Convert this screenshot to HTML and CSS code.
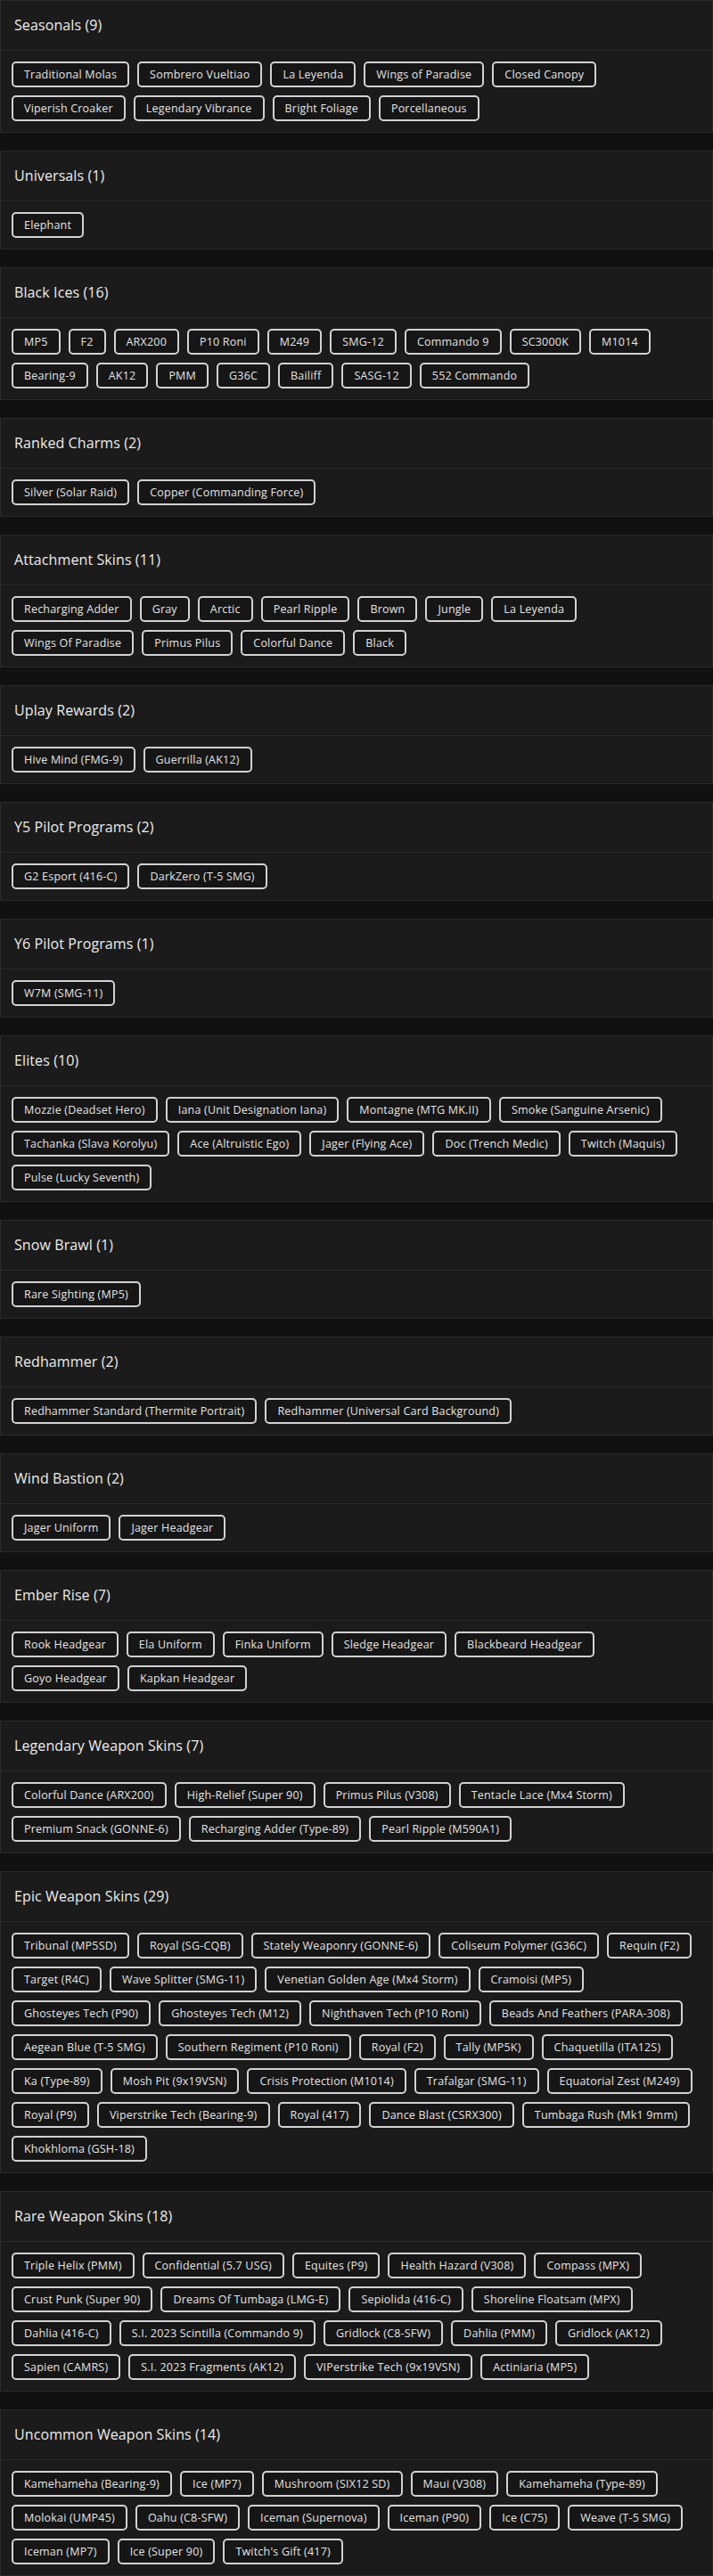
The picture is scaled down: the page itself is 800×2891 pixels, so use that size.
FILE: index.html
```html
<!DOCTYPE html>
<html lang="en">
<head>
<meta charset="utf-8">
<title>Collection</title>
<link rel="stylesheet" href="styles.css">
</head>
<body>
<main class="page">
  <section class="card">
    <header class="card-head"><h2 class="card-title">Seasonals (9)</h2></header>
    <div class="chips">
      <span class="chip">Traditional Molas</span><span class="chip">Sombrero Vueltiao</span><span class="chip">La Leyenda</span><span class="chip">Wings of Paradise</span><span class="chip">Closed Canopy</span><span class="chip">Viperish Croaker</span><span class="chip">Legendary Vibrance</span><span class="chip">Bright Foliage</span><span class="chip">Porcellaneous</span>
    </div>
  </section>
  <section class="card">
    <header class="card-head"><h2 class="card-title">Universals (1)</h2></header>
    <div class="chips"><span class="chip">Elephant</span></div>
  </section>
  <section class="card">
    <header class="card-head"><h2 class="card-title">Black Ices (16)</h2></header>
    <div class="chips">
      <span class="chip">MP5</span><span class="chip">F2</span><span class="chip">ARX200</span><span class="chip">P10 Roni</span><span class="chip">M249</span><span class="chip">SMG-12</span><span class="chip">Commando 9</span><span class="chip">SC3000K</span><span class="chip">M1014</span><span class="chip">Bearing-9</span><span class="chip">AK12</span><span class="chip">PMM</span><span class="chip">G36C</span><span class="chip">Bailiff</span><span class="chip">SASG-12</span><span class="chip">552 Commando</span>
    </div>
  </section>
  <section class="card">
    <header class="card-head"><h2 class="card-title">Ranked Charms (2)</h2></header>
    <div class="chips"><span class="chip">Silver (Solar Raid)</span><span class="chip">Copper (Commanding Force)</span></div>
  </section>
  <section class="card">
    <header class="card-head"><h2 class="card-title">Attachment Skins (11)</h2></header>
    <div class="chips">
      <span class="chip">Recharging Adder</span><span class="chip">Gray</span><span class="chip">Arctic</span><span class="chip">Pearl Ripple</span><span class="chip">Brown</span><span class="chip">Jungle</span><span class="chip">La Leyenda</span><span class="chip">Wings Of Paradise</span><span class="chip">Primus Pilus</span><span class="chip">Colorful Dance</span><span class="chip">Black</span>
    </div>
  </section>
  <section class="card">
    <header class="card-head"><h2 class="card-title">Uplay Rewards (2)</h2></header>
    <div class="chips"><span class="chip">Hive Mind (FMG-9)</span><span class="chip">Guerrilla (AK12)</span></div>
  </section>
  <section class="card">
    <header class="card-head"><h2 class="card-title">Y5 Pilot Programs (2)</h2></header>
    <div class="chips"><span class="chip">G2 Esport (416-C)</span><span class="chip">DarkZero (T-5 SMG)</span></div>
  </section>
  <section class="card">
    <header class="card-head"><h2 class="card-title">Y6 Pilot Programs (1)</h2></header>
    <div class="chips"><span class="chip">W7M (SMG-11)</span></div>
  </section>
  <section class="card">
    <header class="card-head"><h2 class="card-title">Elites (10)</h2></header>
    <div class="chips">
      <span class="chip">Mozzie (Deadset Hero)</span><span class="chip">Iana (Unit Designation Iana)</span><span class="chip">Montagne (MTG MK.II)</span><span class="chip">Smoke (Sanguine Arsenic)</span><span class="chip">Tachanka (Slava Korolyu)</span><span class="chip">Ace (Altruistic Ego)</span><span class="chip">Jager (Flying Ace)</span><span class="chip">Doc (Trench Medic)</span><span class="chip">Twitch (Maquis)</span><span class="chip">Pulse (Lucky Seventh)</span>
    </div>
  </section>
  <section class="card">
    <header class="card-head"><h2 class="card-title">Snow Brawl (1)</h2></header>
    <div class="chips"><span class="chip">Rare Sighting (MP5)</span></div>
  </section>
  <section class="card">
    <header class="card-head"><h2 class="card-title">Redhammer (2)</h2></header>
    <div class="chips"><span class="chip">Redhammer Standard (Thermite Portrait)</span><span class="chip">Redhammer (Universal Card Background)</span></div>
  </section>
  <section class="card">
    <header class="card-head"><h2 class="card-title">Wind Bastion (2)</h2></header>
    <div class="chips"><span class="chip">Jager Uniform</span><span class="chip">Jager Headgear</span></div>
  </section>
  <section class="card">
    <header class="card-head"><h2 class="card-title">Ember Rise (7)</h2></header>
    <div class="chips">
      <span class="chip">Rook Headgear</span><span class="chip">Ela Uniform</span><span class="chip">Finka Uniform</span><span class="chip">Sledge Headgear</span><span class="chip">Blackbeard Headgear</span><span class="chip">Goyo Headgear</span><span class="chip">Kapkan Headgear</span>
    </div>
  </section>
  <section class="card">
    <header class="card-head"><h2 class="card-title">Legendary Weapon Skins (7)</h2></header>
    <div class="chips">
      <span class="chip">Colorful Dance (ARX200)</span><span class="chip">High-Relief (Super 90)</span><span class="chip">Primus Pilus (V308)</span><span class="chip">Tentacle Lace (Mx4 Storm)</span><span class="chip">Premium Snack (GONNE-6)</span><span class="chip">Recharging Adder (Type-89)</span><span class="chip">Pearl Ripple (M590A1)</span>
    </div>
  </section>
  <section class="card">
    <header class="card-head"><h2 class="card-title">Epic Weapon Skins (29)</h2></header>
    <div class="chips">
      <span class="chip">Tribunal (MP5SD)</span><span class="chip">Royal (SG-CQB)</span><span class="chip">Stately Weaponry (GONNE-6)</span><span class="chip">Coliseum Polymer (G36C)</span><span class="chip">Requin (F2)</span><span class="chip">Target (R4C)</span><span class="chip">Wave Splitter (SMG-11)</span><span class="chip">Venetian Golden Age (Mx4 Storm)</span><span class="chip">Cramoisi (MP5)</span><span class="chip">Ghosteyes Tech (P90)</span><span class="chip">Ghosteyes Tech (M12)</span><span class="chip">Nighthaven Tech (P10 Roni)</span><span class="chip">Beads And Feathers (PARA-308)</span><span class="chip">Aegean Blue (T-5 SMG)</span><span class="chip">Southern Regiment (P10 Roni)</span><span class="chip">Royal (F2)</span><span class="chip">Tally (MP5K)</span><span class="chip">Chaquetilla (ITA12S)</span><span class="chip">Ka (Type-89)</span><span class="chip">Mosh Pit (9x19VSN)</span><span class="chip">Crisis Protection (M1014)</span><span class="chip">Trafalgar (SMG-11)</span><span class="chip">Equatorial Zest (M249)</span><span class="chip">Royal (P9)</span><span class="chip">Viperstrike Tech (Bearing-9)</span><span class="chip">Royal (417)</span><span class="chip">Dance Blast (CSRX300)</span><span class="chip">Tumbaga Rush (Mk1 9mm)</span><span class="chip">Khokhloma (GSH-18)</span>
    </div>
  </section>
  <section class="card">
    <header class="card-head"><h2 class="card-title">Rare Weapon Skins (18)</h2></header>
    <div class="chips">
      <span class="chip">Triple Helix (PMM)</span><span class="chip">Confidential (5.7 USG)</span><span class="chip">Equites (P9)</span><span class="chip">Health Hazard (V308)</span><span class="chip">Compass (MPX)</span><span class="chip">Crust Punk (Super 90)</span><span class="chip">Dreams Of Tumbaga (LMG-E)</span><span class="chip">Sepiolida (416-C)</span><span class="chip">Shoreline Floatsam (MPX)</span><span class="chip">Dahlia (416-C)</span><span class="chip">S.I. 2023 Scintilla (Commando 9)</span><span class="chip">Gridlock (C8-SFW)</span><span class="chip">Dahlia (PMM)</span><span class="chip">Gridlock (AK12)</span><span class="chip">Sapien (CAMRS)</span><span class="chip">S.I. 2023 Fragments (AK12)</span><span class="chip">VIPerstrike Tech (9x19VSN)</span><span class="chip">Actiniaria (MP5)</span>
    </div>
  </section>
  <section class="card">
    <header class="card-head"><h2 class="card-title">Uncommon Weapon Skins (14)</h2></header>
    <div class="chips">
      <span class="chip">Kamehameha (Bearing-9)</span><span class="chip">Ice (MP7)</span><span class="chip">Mushroom (SIX12 SD)</span><span class="chip">Maui (V308)</span><span class="chip">Kamehameha (Type-89)</span><span class="chip">Molokai (UMP45)</span><span class="chip">Oahu (C8-SFW)</span><span class="chip">Iceman (Supernova)</span><span class="chip">Iceman (P90)</span><span class="chip">Ice (C75)</span><span class="chip">Weave (T-5 SMG)</span><span class="chip">Iceman (MP7)</span><span class="chip">Ice (Super 90)</span><span class="chip">Twitch's Gift (417)</span>
    </div>
  </section>
</main>
</body>
</html>
```

FILE: styles.css
```css
html, body {
  margin: 0;
  padding: 0;
  background: #111111;
}

body {
  font-family: "Open Sans", "Noto Sans", sans-serif;
  color: #e6e6e6;
}

.page {
  display: flex;
  flex-direction: column;
  gap: 20px;
}

.card {
  background: #1b1b1b;
  border: 1px solid #2a2a2a;
}

.card-head {
  padding: 16px 15px;
  border-bottom: 1px solid #2a2a2a;
}

.card-title {
  margin: 0;
  font-size: 16px;
  line-height: 23px;
  font-weight: 500;
  letter-spacing: 0.1px;
  color: #ececec;
}

.chips {
  display: flex;
  flex-wrap: wrap;
  gap: 9px;
  padding: 12px;
}

.chip {
  display: inline-block;
  border: 2px solid #d2d2d2;
  border-radius: 5px;
  background: #161616;
  padding: 4px 12px;
  font-size: 12.5px;
  line-height: 17px;
  letter-spacing: 0.2px;
  color: #e4e4e4;
  white-space: nowrap;
}
```
